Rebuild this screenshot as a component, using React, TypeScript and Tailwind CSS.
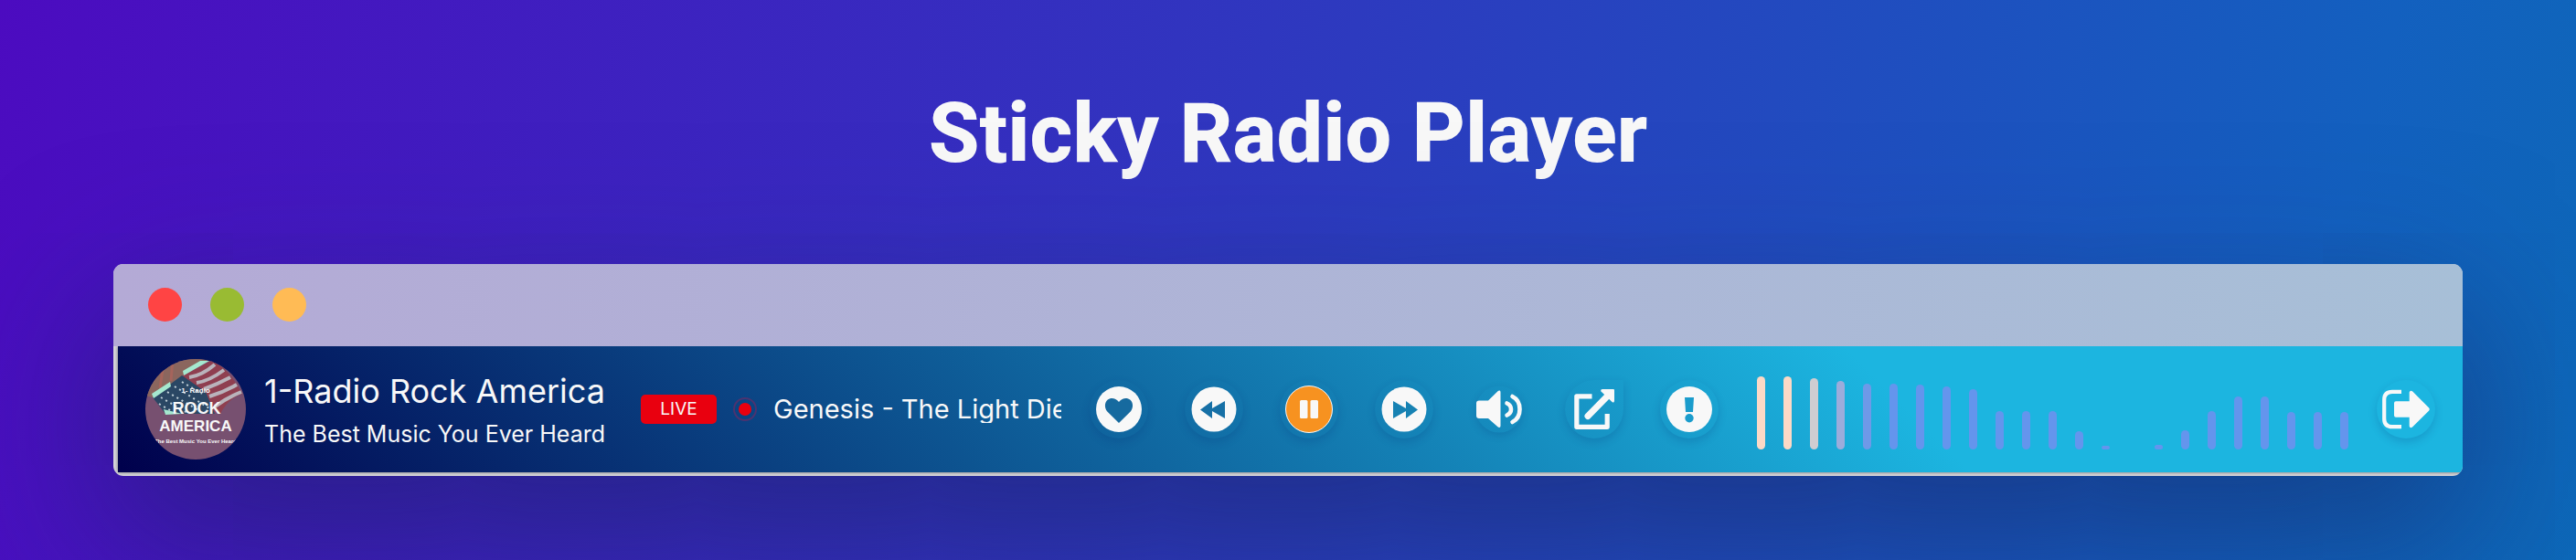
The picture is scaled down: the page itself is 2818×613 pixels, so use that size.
import type { ReactNode } from "react";

type ButtonProps = { label: string; shape?: string; children: ReactNode };

function IconButton({ label, shape = "rounded-full", children }: ButtonProps) {
  return (
    <button
      type="button"
      aria-label={label}
      className="relative grid size-16 shrink-0 place-items-center text-[#f8f8f8]"
    >
      <span
        className={`absolute size-16 ${shape} shadow-[0_4px_10px_rgba(0,40,110,0.18)]`}
      />
      <svg viewBox="0 0 64 64" className="relative size-16" fill="currentColor">
        {children}
      </svg>
    </button>
  );
}

const bars = [
  { h: 80, c: "#fcd9c6" },
  { h: 80, c: "#fcd9c6" },
  { h: 78, c: "#cfcdd1" },
  { h: 75, c: "#9cacdb" },
  { h: 72, c: "#6e99e8" },
  { h: 72, c: "#6495ed" },
  { h: 71, c: "#6495ed" },
  { h: 69, c: "#6495ed" },
  { h: 66, c: "#6495ed" },
  { h: 42, c: "#6495ed" },
  { h: 42, c: "#6495ed" },
  { h: 42, c: "#6495ed" },
  { h: 20, c: "#6495ed" },
  { h: 4, c: "#6495ed" },
  { h: 0, c: "#6495ed" },
  { h: 5, c: "#6495ed" },
  { h: 21, c: "#6495ed" },
  { h: 42, c: "#6495ed" },
  { h: 58, c: "#6495ed" },
  { h: 58, c: "#6495ed" },
  { h: 41, c: "#6495ed" },
  { h: 41, c: "#6495ed" },
  { h: 41, c: "#6495ed" },
];

function Visualizer() {
  return (
    <div className="mb-[25px] ml-[42px] mr-[31px] flex flex-1 items-end justify-between self-end">
      {bars.map((bar, i) => (
        <span
          key={i}
          className="w-[9px] rounded-full"
          style={{ height: bar.h, background: bar.c }}
        />
      ))}
    </div>
  );
}

function StationLogo() {
  return (
    <svg viewBox="0 0 110 110" className="size-[110px] shrink-0 rounded-full">
      <rect width="110" height="110" fill="#775070" />
      <path d="M0 40 L0 0 L70 0 L41 18 L8 42 Z" fill="#8b665e" />
      <path d="M30 0 L28 24 M20 4 L16 32" stroke="#a5645c" strokeWidth="3" />
      <path d="M41 18 L72 2 Q90 8 106 38 Q90 44 82 60 L68 56 Z" fill="#8f3f50" />
      <g stroke="#b9b3bb" strokeWidth="4" fill="none">
        <path d="M48 20 Q62 18 76 6" />
        <path d="M56 26 Q70 24 86 12" />
        <path d="M64 33 Q78 28 93 20" />
        <path d="M70 41 Q86 36 100 28" />
        <path d="M76 52 Q90 42 105 36" />
      </g>
      <path d="M8 42 L40 18 L66 36 L76 60 L22 60 Z" fill="#2a4764" />
      <path
        d="M24 36 L58 56 M32 30 L70 54 M40 25 L62 38 M17 42 L46 59 M15 49 L30 58"
        stroke="#c3d2da"
        strokeWidth="2"
        strokeDasharray="2 4"
      />
      <path
        d="M7 38 L27 25 L28 30 L9 43 Z M41 13 L60 2 L70 2 L42 18 Z M20 55 L40 60 L22 61 Z"
        fill="#a5e8cf"
      />
      <g
        fill="#f8f8f8"
        textAnchor="middle"
        fontWeight="700"
        fontFamily="'Liberation Sans Narrow', 'Liberation Sans', sans-serif"
      >
        <text x="55" y="37" fontSize="8">1- Radio</text>
        <text x="56" y="60" fontSize="18">ROCK</text>
        <text x="55" y="79" fontSize="17">AMERICA</text>
        <text x="55" y="92" fontSize="6">The Best Music You Ever Heard</text>
      </g>
    </svg>
  );
}

export default function App() {
  return (
    <main className="min-h-[613px] overflow-hidden bg-[linear-gradient(105deg,#4c0bc0_0%,#2d3abf_50%,#1360bf_88%,#0d68b8_100%)] font-['Inter',sans-serif] text-[#f8f8f8]">
      <div className="flex flex-col px-[124px] pb-[92px] pt-[87px]">
        <h1 className="text-center font-['Roboto',sans-serif] text-[90px] font-extrabold leading-[120px]">
          Sticky Radio Player
        </h1>

        <section
          aria-label="Radio player"
          className="mt-[82px] overflow-hidden rounded-[11px] bg-[#d8d8dc] shadow-[0_60px_180px_0_rgba(20,35,90,0.6)]"
        >
          <div className="relative z-10 flex h-[90px] items-center gap-[31px] bg-gradient-to-r from-[#b4aad6] to-[#a7bfd7] px-[38px] pb-px">
            <span className="size-[37px] rounded-full bg-[#ff4444]" />
            <span className="size-[37px] rounded-full bg-[#99bb33]" />
            <span className="size-[37px] rounded-full bg-[#ffbb55]" />
          </div>

          <div className="mb-1 ml-[5px] flex h-[138px] items-center bg-[linear-gradient(45deg,#00004c_0%,#1cb5e0_75%)] px-[30px] shadow-[0_0_4px_rgba(0,0,0,0.5)]">
            <StationLogo />

            <div className="ml-5 w-[381px] shrink-0 whitespace-nowrap pt-[3px]">
              <h2 className="text-[36px] leading-[50px]">1-Radio Rock America</h2>
              <p className="text-[25px] leading-[44px]">The Best Music You Ever Heard</p>
            </div>

            <span className="ml-[31px] grid h-8 w-[83px] shrink-0 place-items-center rounded-[5px] bg-[#e9000f] text-[19px]">
              LIVE
            </span>
            <span className="ml-[18px] grid size-[26px] shrink-0 place-items-center rounded-full border-2 border-[#4b3370]">
              <span className="size-[14px] rounded-full bg-[#e9000f]" />
            </span>
            <p className="ml-[18px] w-[315px] shrink-0 overflow-hidden whitespace-nowrap text-[29px] leading-[30px]">
              Genesis - The Light Dies Down
            </p>

            <div className="ml-[31px] flex shrink-0 gap-10">
              <IconButton label="Favourite">
                <circle cx="32" cy="32" r="25" />
                <path
                  fill="#166a9f"
                  d="M32 47 L19.3 34.5 C16 31 16.2 24.5 19.5 21.8 C23.5 18.8 28.5 20 32 24 C35.5 20 40.5 18.8 44.5 21.8 C47.8 24.5 48 31 44.7 34.5 Z"
                />
              </IconButton>
              <IconButton label="Previous">
                <circle cx="32" cy="32" r="24.5" />
                <path fill="#1670a6" d="M17 32.5 L30 23 V31 L44 23 V42 L30 34 V42 Z" />
              </IconButton>
              <IconButton label="Pause">
                <circle cx="32" cy="32" r="25.5" fill="#f79220" stroke="#f8f8f8" />
                <rect x="22" y="22" width="8.5" height="20" rx="1.5" />
                <rect x="33.5" y="22" width="8.5" height="20" rx="1.5" />
              </IconButton>
              <IconButton label="Next">
                <circle cx="32" cy="32" r="24.5" />
                <path fill="#1782b3" d="M47 32.5 L34 23 V31 L20 23 V42 L34 34 V42 Z" />
              </IconButton>
              <IconButton label="Volume" shape="rounded-full scale-80">
                <path d="M10 22.5 H20 L30.5 12.3 C32 11 33.5 11.5 33.5 13.5 V50 C33.5 52 32 52.5 30.5 51.2 L20 42 H10 Q7 42 7 39 V25.5 Q7 22.5 10 22.5 Z" />
                <path
                  fill="none"
                  stroke="currentColor"
                  strokeWidth="4.6"
                  strokeLinecap="round"
                  d="M40.5 25.5 Q45 27.5 45 32 Q45 36.5 40.5 38.5 M46.5 18 Q54.5 22 54.5 32 Q54.5 42 46.5 46"
                />
              </IconButton>
              <IconButton label="Open in new window" shape="rounded-b-full rounded-tl-full rounded-tr-lg">
                <path
                  fill="none"
                  stroke="currentColor"
                  strokeWidth="5.2"
                  strokeLinejoin="round"
                  d="M29.5 17.8 H12.8 V51.3 H46.2 V37"
                />
                <path
                  fill="none"
                  stroke="currentColor"
                  strokeWidth="7"
                  strokeLinecap="round"
                  d="M25 39.5 L47 17"
                />
                <path d="M41 10 H53 Q54 10 54 11 V23 Q53.5 25.5 51.5 24 L39.5 12.5 Q38.5 10 41 10 Z" />
              </IconButton>
              <IconButton label="Information">
                <circle cx="32" cy="32" r="25" />
                <path fill="#1a9ccc" d="M27 19 H37 L36 35 H28 Z" />
                <circle fill="#1a9ccc" cx="32" cy="41.7" r="4.7" />
              </IconButton>
            </div>

            <Visualizer />

            <IconButton label="Exit">
              <path
                fill="none"
                stroke="currentColor"
                strokeWidth="4.2"
                d="M27 12.8 H17 Q8.2 12.8 8.2 21.5 V42.5 Q8.2 51.2 17 51.2 H27"
              />
              <path d="M21 23.3 H35.7 V13.5 Q36.5 10.5 39 12.3 L57.2 30.5 Q58.5 32 57.2 33.5 L39 51.5 Q36.5 53.5 35.7 50.5 V40.7 H21 Q19 40.7 19 38.7 V25.3 Q19 23.3 21 23.3 Z" />
            </IconButton>
          </div>
        </section>
      </div>
    </main>
  );
}
